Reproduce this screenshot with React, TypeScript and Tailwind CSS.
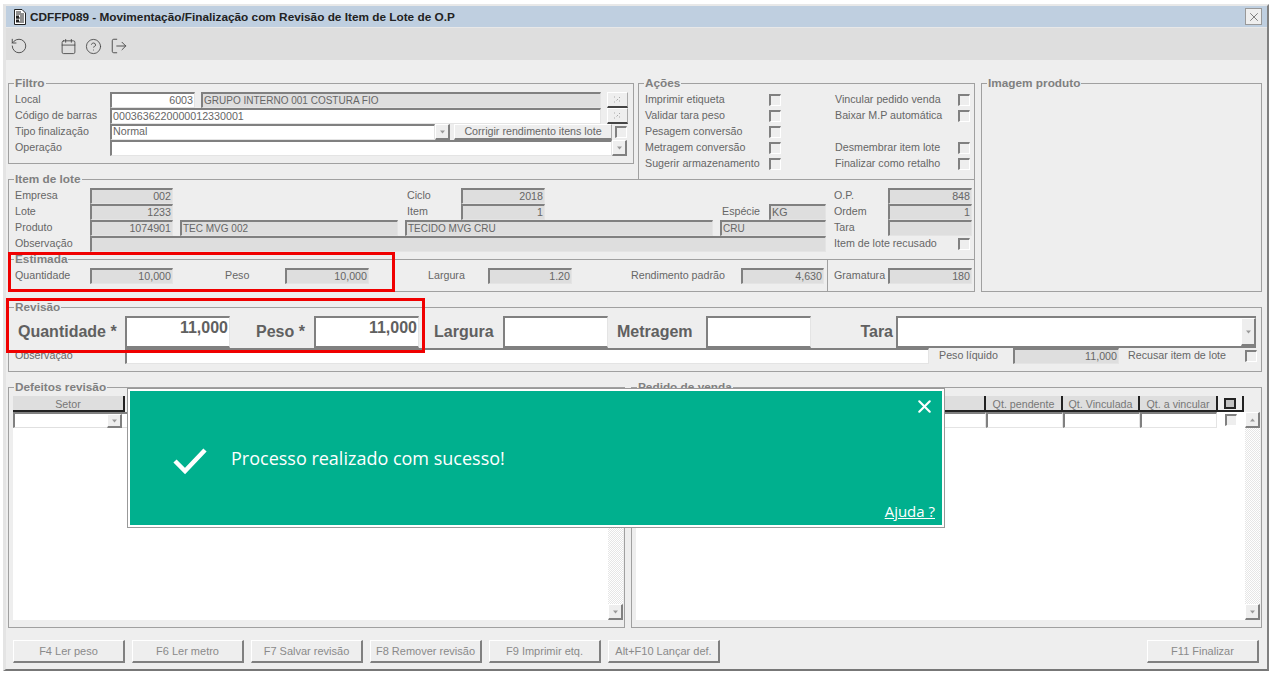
import React from "react";
import { RotateCcw, Calendar, CircleHelp, LogOut, X } from "lucide-react";

const Lbl = ({ className = "", children }: { className?: string; children?: React.ReactNode }) => (
  <div className={`shrink-0 h-4 leading-[14px] whitespace-nowrap text-[#666] ${className}`}>{children}</div>
);

const Inp = ({ className = "", children }: { className?: string; children?: React.ReactNode }) => (
  <div className={`shrink-0 h-4 border-l-2 border-t-2 border-b border-r border-l-[#808080] border-t-[#808080] border-b-[#e4e4e4] border-r-[#e4e4e4] px-px leading-[13px] text-[#666] whitespace-nowrap overflow-hidden ${className}`}>
    {children}
  </div>
);

const Arrow = ({ up = false, className = "" }: { up?: boolean; className?: string }) => (
  <div className={`shrink-0 w-[15px] h-4 bg-[#eee] border-t border-l border-t-white border-l-white border-r-2 border-b-2 border-r-[#808080] border-b-[#808080] flex items-center justify-center ${className}`}>
    <svg width="7" height="4" viewBox="0 0 7 4">
      <path d={up ? "M3.5 0.5 L6 3.5 L1 3.5 Z" : "M1 0.5 L6 0.5 L3.5 3.5 Z"} fill="#999" />
    </svg>
  </div>
);

const Cb = ({ className = "" }: { className?: string }) => (
  <div className={`shrink-0 w-3 h-3 mt-0.5 border-l-2 border-t-2 border-b border-r border-l-[#808080] border-t-[#808080] border-b-white border-r-white ${className}`} />
);

const Wand = () => (
  <div className="shrink-0 w-[21px] h-4 bg-[#eee] border-t border-l border-t-white border-l-white border-r border-b-2 border-r-[#aaa] border-b-[#444] flex items-center justify-center">
    <svg width="9" height="7" viewBox="0 0 9 7">
      <path d="M1 6 L2 6 M3.5 4.5 L5 3 M6 2 L7 1 M6 5 L7 5 M1 1 L2 1" stroke="#aaa" strokeWidth="1" />
    </svg>
  </div>
);

const Legend = ({ className = "", children }: { className?: string; children?: React.ReactNode }) => (
  <div className={`w-fit h-[13px] -mt-[7px] px-px bg-[#eee] leading-[13px] text-[11.8px] font-bold text-[#808080] whitespace-nowrap ${className}`}>{children}</div>
);

const Group = ({ title, lg = "ml-[5px]", className = "", children }: { title: string; lg?: string; className?: string; children?: React.ReactNode }) => (
  <div className={`shrink-0 border border-[#a0a0a0] ${className}`}>
    <Legend className={lg}>{title}</Legend>
    {children}
  </div>
);

const Row = ({ children }: { children?: React.ReactNode }) => <div className="flex h-4">{children}</div>;

const Big = ({ className = "", children }: { className?: string; children?: React.ReactNode }) => (
  <div className={`shrink-0 text-[16px] font-bold text-[#606060] leading-[32px] whitespace-nowrap ${className}`}>{children}</div>
);

const BigInp = ({ children, className = "" }: { children?: React.ReactNode; className?: string }) => (
  <div className={`shrink-0 h-8 bg-white border-l-2 border-t-2 border-b-2 border-r border-l-[#808080] border-t-[#808080] border-b-[#808080] border-r-[#e4e4e4] text-right pr-px text-[16px] font-bold text-[#606060] leading-[20px] ${className}`}>
    {children}
  </div>
);

const Btn = ({ children, className = "" }: { children?: React.ReactNode; className?: string }) => (
  <div className={`shrink-0 w-28 h-[23px] bg-[#eee] border-t border-l border-t-white border-l-white border-r-2 border-b-2 border-r-[#808080] border-b-[#808080] flex items-center justify-center text-[11px] text-[#8a8a8a] whitespace-nowrap ${className}`}>
    {children}
  </div>
);

const Head = ({ children, className = "" }: { children?: React.ReactNode; className?: string }) => (
  <div className={`shrink-0 h-4 pt-px bg-[#dedede] border-r-2 border-r-[#222] border-b-2 border-b-[#222] flex items-center justify-center text-[#777] leading-[12px] whitespace-nowrap ${className}`}>
    {children}
  </div>
);

const Track = () => (
  <div className="flex-1 bg-[repeating-conic-gradient(#e6e6e6_0_25%,#ffffff_0_50%)] bg-[length:2px_2px]" />
);

const DocIcon = () => (
  <svg width="15" height="16" viewBox="0 0 15 16" className="shrink-0">
    <path d="M2.5 0.5 H10 L13.5 4 V15.5 H2.5 Z" fill="#fff" stroke="#222" />
    <path d="M4 3 H9 M4 5 H12 M8 7 H12 M4 9 H12 M8 11 H12 M4 13 H12" stroke="#222" strokeWidth="1.2" />
    <rect x="4" y="6.5" width="3" height="3" fill="#222" />
    <rect x="4" y="10.5" width="3" height="2.5" fill="#222" />
  </svg>
);

export default function App() {
  return (
    <div className="relative w-[1274px] h-[675px] bg-white overflow-hidden pt-1 pl-[3px] font-['Liberation_Sans',Arial,sans-serif] text-[10.7px]">
      <div className="w-[1266px] h-[667px] flex flex-col border-t-2 border-t-[#e8e8e8] border-l-[3px] border-l-[#e4e4e4] border-r-2 border-r-[#808080] border-b-2 border-b-[#777]">
        {/* Title */}
        <div className="h-[22px] shrink-0 bg-[#bfcfe0] border-b border-b-[#e8e8e8] flex items-center pl-1.5 pr-[5px]">
          <DocIcon />
          <div className="ml-[3px] pt-0.5 text-[11.8px] font-bold text-[#222]">CDFFP089 - Movimentação/Finalização com Revisão de Item de Lote de O.P</div>
          <div className="ml-auto w-[17px] h-[17px] bg-[#eee] border border-[#999] flex items-center justify-center">
            <X size={14} strokeWidth={1.4} color="#666" />
          </div>
        </div>
        {/* Toolbar */}
        <div className="h-8 shrink-0 bg-[#dedede] flex items-center pl-1 pt-1 text-[#444]">
          <RotateCcw size={18} strokeWidth={1.2} />
          <Calendar size={17} strokeWidth={1.2} className="ml-8" />
          <CircleHelp size={17} strokeWidth={1.2} className="ml-2" />
          <LogOut size={18} strokeWidth={1.2} className="ml-2" />
        </div>
        {/* Body */}
        <div className="flex-1 bg-[#eee] pt-[23px] pl-0.5">
          {/* Upper block */}
          <div className="flex h-[209px]">
            <div className="w-[967px] shrink-0 flex flex-col">
              <div className="flex h-24 shrink-0">
                <Group title="Filtro" lg="-ml-px" className="w-[626px] h-[81px] pl-1.5">
                  <div className="mt-0.5">
                    <Row>
                      <Lbl className="w-[95px]">Local</Lbl>
                      <Inp className="w-[85px] bg-white text-right">6003</Inp>
                      <Inp className="w-[400px] ml-1.5 bg-[#dedede] text-[10px]">GRUPO INTERNO 001 COSTURA FIO</Inp>
                      <div className="ml-1.5"><Wand /></div>
                    </Row>
                    <Row>
                      <Lbl className="w-[95px]">Código de barras</Lbl>
                      <Inp className="w-[491px] bg-white">0003636220000012330001</Inp>
                      <div className="ml-1.5"><Wand /></div>
                    </Row>
                    <Row>
                      <Lbl className="w-[95px]">Tipo finalização</Lbl>
                      <Inp className="w-[325px] bg-white border-t-0"><div className="-mt-px">Normal</div></Inp>
                      <Arrow />
                      <div className="shrink-0 ml-1 w-[158px] h-4 bg-[#eee] border-t border-l border-t-white border-l-white border-r border-b-2 border-r-[#aaa] border-b-[#808080] flex items-center justify-center text-[#666]">Corrigir rendimento itens lote</div>
                      <Cb className="ml-[3px]" />
                    </Row>
                    <Row>
                      <Lbl className="w-[95px]">Operação</Lbl>
                      <Inp className="w-[502px] bg-white border-t-0" />
                      <Arrow />
                    </Row>
                  </div>
                </Group>
                <Group title="Ações" lg="-ml-px" className="w-[337px] h-24 ml-1 pl-1.5 border-b-0">
                  <div className="mt-0.5">
                    <Row><Lbl className="w-[124px]">Imprimir etiqueta</Lbl><Cb /><Lbl className="w-[123px] ml-[54px]">Vincular pedido venda</Lbl><Cb /></Row>
                    <Row><Lbl className="w-[124px]">Validar tara peso</Lbl><Cb /><Lbl className="w-[123px] ml-[54px]">Baixar M.P automática</Lbl><Cb /></Row>
                    <Row><Lbl className="w-[124px]">Pesagem conversão</Lbl><Cb /></Row>
                    <Row><Lbl className="w-[124px]">Metragem conversão</Lbl><Cb /><Lbl className="w-[123px] ml-[54px]">Desmembrar item lote</Lbl><Cb /></Row>
                    <Row><Lbl className="w-[124px]">Sugerir armazenamento</Lbl><Cb /><Lbl className="w-[123px] ml-[54px]">Finalizar como retalho</Lbl><Cb /></Row>
                  </div>
                </Group>
              </div>
              <Group title="Item de lote" lg="-ml-px" className="w-[967px] h-20 border-b-0 pl-1.5">
                <div className="mt-0.5">
                  <Row>
                    <Lbl className="w-[75px]">Empresa</Lbl>
                    <Inp className="w-[83px] bg-[#dedede] text-right">002</Inp>
                    <Lbl className="ml-[234px] w-[54px]">Ciclo</Lbl>
                    <Inp className="w-[84px] bg-[#dedede] text-right">2018</Inp>
                    <Lbl className="ml-[289px] w-[54px]">O.P.</Lbl>
                    <Inp className="w-[84px] bg-[#dedede] text-right">848</Inp>
                  </Row>
                  <Row>
                    <Lbl className="w-[75px]">Lote</Lbl>
                    <Inp className="w-[83px] bg-[#dedede] text-right">1233</Inp>
                    <Lbl className="ml-[234px] w-[54px]">Item</Lbl>
                    <Inp className="w-[84px] bg-[#dedede] text-right">1</Inp>
                    <Lbl className="ml-[177px] w-[47px]">Espécie</Lbl>
                    <Inp className="w-[57px] bg-[#dedede]">KG</Inp>
                    <Lbl className="ml-2 w-[54px]">Ordem</Lbl>
                    <Inp className="w-[84px] bg-[#dedede] text-right">1</Inp>
                  </Row>
                  <Row>
                    <Lbl className="w-[75px]">Produto</Lbl>
                    <Inp className="w-[83px] bg-[#dedede] text-right">1074901</Inp>
                    <Inp className="ml-[7px] w-[218px] bg-[#dedede] text-[10px]">TEC MVG 002</Inp>
                    <Inp className="ml-[7px] w-[308px] bg-[#dedede] text-[10px]">TECIDO MVG CRU</Inp>
                    <Inp className="ml-[7px] w-[106px] bg-[#dedede] text-[10px]">CRU</Inp>
                    <Lbl className="ml-2 w-[54px]">Tara</Lbl>
                    <Inp className="w-[84px] bg-[#dedede]" />
                  </Row>
                  <Row>
                    <Lbl className="w-[75px]">Observação</Lbl>
                    <Inp className="w-[736px] bg-[#dedede]" />
                    <Lbl className="ml-2 w-[124px]">Item de lote recusado</Lbl>
                    <Cb />
                  </Row>
                </div>
              </Group>
              <div className="flex h-[33px] w-[967px] shrink-0 border border-[#a0a0a0]">
                <div className="w-[819px] shrink-0 border-r border-r-[#a0a0a0] pl-1.5">
                  <Legend className="-ml-px">Estimada</Legend>
                  <div className="mt-0.5">
                    <Row>
                      <Lbl className="w-[75px]">Quantidade</Lbl>
                      <Inp className="w-[83px] bg-[#dedede] text-right">10,000</Inp>
                      <Lbl className="ml-[52px] w-[60px]">Peso</Lbl>
                      <Inp className="w-[84px] bg-[#dedede] text-right">10,000</Inp>
                      <Lbl className="ml-[59px] w-[60px]">Largura</Lbl>
                      <Inp className="w-[84px] bg-[#dedede] text-right">1.20</Inp>
                      <Lbl className="ml-[59px] w-[110px]">Rendimento padrão</Lbl>
                      <Inp className="w-[83px] bg-[#dedede] text-right">4,630</Inp>
                    </Row>
                  </div>
                </div>
                <div className="pl-1.5 pt-2">
                  <Row>
                    <Lbl className="w-[54px]">Gramatura</Lbl>
                    <Inp className="w-[84px] bg-[#dedede] text-right">180</Inp>
                  </Row>
                </div>
              </div>
            </div>
            <Group title="Imagem produto" className="w-[281px] h-[209px] ml-1.5" />
          </div>

          {/* Revisão */}
          <Group title="Revisão" className="w-[1254px] h-[65px] mt-[15px]">
            <div className="mt-0.5 flex h-8">
              <Big className="ml-[9px] w-[107px]">Quantidade *</Big>
              <BigInp className="w-[105px]">11,000</BigInp>
              <Big className="ml-[26px] w-[58px]">Peso *</Big>
              <BigInp className="w-[105px]">11,000</BigInp>
              <Big className="ml-[15px] w-[69px]">Largura</Big>
              <BigInp className="w-[105px]" />
              <Big className="ml-[9px] w-[89px]">Metragem</Big>
              <BigInp className="w-[105px]" />
              <Big className="w-[82px] text-right">Tara</Big>
              <div className="ml-[3px] w-[360px] h-8 shrink-0 flex bg-white border-l-2 border-t-2 border-b-2 border-l-[#808080] border-t-[#808080] border-b-[#808080]">
                <div className="flex-1" />
                <Arrow className="h-[28px]" />
              </div>
            </div>
            <div className="flex h-4 pl-1.5">
              <Lbl className="w-[110px]">Observação</Lbl>
              <Inp className="w-[804px] bg-white border-t-0" />
              <Lbl className="ml-2.5 w-[74px]">Peso líquido</Lbl>
              <Inp className="w-[106px] bg-[#dedede] text-right">11,000</Inp>
              <Lbl className="ml-[9px] w-[117px]">Recusar item de lote</Lbl>
              <Cb />
            </div>
          </Group>

          {/* Lists */}
          <div className="flex mt-[15px] h-[241px]">
            <Group title="Defeitos revisão" lg="ml-px" className="w-[617px] h-[241px] pl-1">
              <div className="mt-0.5 flex h-56">
                <div className="w-[595px] shrink-0 flex flex-col">
                  <Head className="w-28">Setor</Head>
                  <div className="flex-1 bg-white">
                    <div className="flex w-[115px] h-4 border-l-2 border-t-2 border-l-[#808080] border-t-[#808080] border-b border-b-[#e0e0e0]">
                      <div className="w-[92px]" />
                      <Arrow className="h-[14px]" />
                    </div>
                  </div>
                </div>
                <div className="w-[15px] shrink-0 flex flex-col pt-4">
                  <Arrow up />
                  <Track />
                  <Arrow />
                </div>
              </div>
            </Group>
            <Group title="Pedido de venda" lg="ml-px" className="w-[631px] h-[241px] ml-1.5 pl-1">
              <div className="mt-0.5 flex h-56">
                <div className="w-[609px] shrink-0 flex flex-col">
                  <div className="flex">
                    <Head className="w-[350px]" />
                    <Head className="w-[77px]">Qt. pendente</Head>
                    <Head className="w-[77px]">Qt. Vinculada</Head>
                    <Head className="w-[78px]">Qt. a vincular</Head>
                    <Head className="w-[26px] bg-[#eee]">
                      <div className="w-3 h-[11px] bg-[#c0c0c0] border-2 border-[#222]" />
                    </Head>
                  </div>
                  <div className="flex-1 bg-white">
                    <div className="flex">
                      <Inp className="w-[350px] bg-white" />
                      <Inp className="w-[77px] bg-white" />
                      <Inp className="w-[77px] bg-white" />
                      <Inp className="w-[77px] bg-white" />
                      <Cb className="ml-2 bg-[#eee]" />
                    </div>
                  </div>
                </div>
                <div className="w-[15px] shrink-0 flex flex-col pt-4">
                  <Arrow up />
                  <Track />
                  <Arrow />
                </div>
              </div>
            </Group>
          </div>

          {/* Buttons */}
          <div className="w-[1254px] flex gap-[7px] mt-3 pl-[5px] pr-[3px]">
            <Btn>F4 Ler peso</Btn>
            <Btn>F6 Ler metro</Btn>
            <Btn>F7 Salvar revisão</Btn>
            <Btn>F8 Remover revisão</Btn>
            <Btn>F9 Imprimir etq.</Btn>
            <Btn>Alt+F10 Lançar def.</Btn>
            <Btn className="ml-auto">F11 Finalizar</Btn>
          </div>
        </div>
      </div>

      {/* Red highlight boxes */}
      <div className="absolute left-2 top-[252px] w-[387px] h-[40px] border-[3px] border-[#f00000]" />
      <div className="absolute left-[6px] top-[298px] w-[419px] h-[55px] border-[3px] border-[#f00000]" />

      {/* Success popup */}
      <div className="absolute left-[128px] top-[389px] w-[816px] h-[138px] flex flex-col bg-[#00b08e] border-2 border-white outline outline-1 outline-[#999] shadow-[1px_1px_0_#666] text-white font-['Open_Sans',sans-serif]">
        <div className="flex-1 flex items-center pl-[42px] pt-[6px]">
          <svg width="36" height="28" viewBox="0 0 36 28" className="shrink-0">
            <path d="M3 14 L13 24 L33 3" fill="none" stroke="#fff" strokeWidth="4.5" />
          </svg>
          <div className="ml-[23px] text-[18px] leading-[24px] -mt-[6px]">Processo realizado com sucesso!</div>
        </div>
        <div className="absolute right-[7px] top-[5px]">
          <X size={21} strokeWidth={2.4} color="#fff" />
        </div>
        <div className="absolute right-[7px] bottom-[4px] text-[15px] leading-[20px] underline">Ajuda ?</div>
      </div>
    </div>
  );
}
